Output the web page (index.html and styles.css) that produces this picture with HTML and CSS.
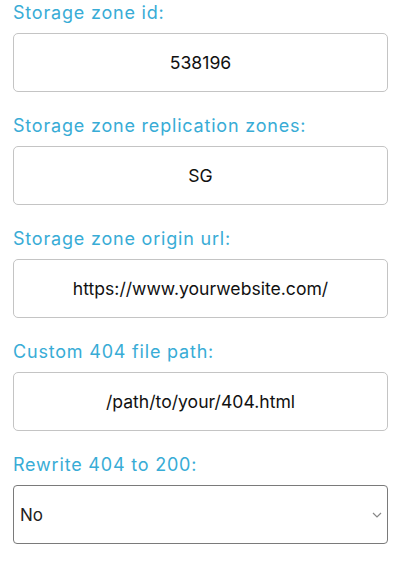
FILE: index.html
```html
<!DOCTYPE html>
<html>
<head>
<meta charset="utf-8">
<link rel="stylesheet" href="styles.css">
</head>
<body>
<form class="form">
  <div class="field">
    <label class="label">Storage zone id:</label>
    <input class="input" type="text" value="538196">
  </div>
  <div class="field">
    <label class="label">Storage zone replication zones:</label>
    <input class="input" type="text" value="SG">
  </div>
  <div class="field">
    <label class="label">Storage zone origin url:</label>
    <input class="input" type="text" value="https://www.yourwebsite.com/">
  </div>
  <div class="field">
    <label class="label">Custom 404 file path:</label>
    <input class="input" type="text" value="/path/to/your/404.html">
  </div>
  <div class="field">
    <label class="label">Rewrite 404 to 200:</label>
    <div class="select-wrap">
      <select class="select">
        <option>No</option>
        <option>Yes</option>
      </select>
      <svg class="chevron" width="10" height="6" viewBox="0 0 10 6"><path d="M1 1 L5 5 L9 1" fill="none" stroke="#888" stroke-width="1.2"/></svg>
    </div>
  </div>
</form>
</body>
</html>
```

FILE: styles.css
```css
html, body {
  margin: 0;
  padding: 0;
  background: #fff;
}
.form {
  width: 375px;
  padding: 0 0 0 13px;
  display: flex;
  flex-direction: column;
  gap: 21px;
}
.field {
  display: flex;
  flex-direction: column;
  gap: 8px;
}
.label {
  font-family: "Inter", sans-serif;
  font-size: 18px;
  line-height: 25px;
  color: #38acd6;
  letter-spacing: 0.8px;
}
.input {
  box-sizing: border-box;
  width: 375px;
  height: 59px;
  margin: 0;
  border: 1px solid #c4c4c4;
  border-radius: 5px;
  text-align: center;
  font-family: "Inter", sans-serif;
  font-size: 17.6px;
  color: #111;
  background: #fff;
  outline: none;
}
.select-wrap {
  position: relative;
  width: 375px;
}
.select {
  box-sizing: border-box;
  width: 375px;
  height: 59px;
  margin: 0;
  padding: 0 0 0 6px;
  border: 1px solid #7a7a7a;
  border-radius: 4px;
  font-family: "Inter", sans-serif;
  font-size: 17px;
  color: #222;
  background: #fff;
  appearance: none;
  -webkit-appearance: none;
}
.chevron {
  position: absolute;
  right: 6px;
  top: 27px;
}
```
